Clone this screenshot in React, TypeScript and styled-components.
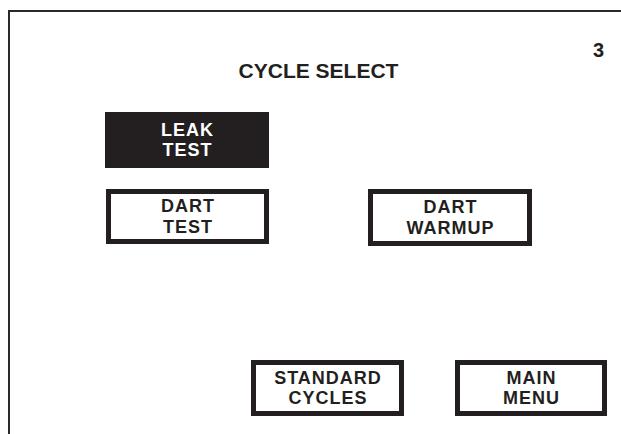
import styled, { createGlobalStyle } from "styled-components";

const GlobalStyle = createGlobalStyle`
  html, body {
    margin: 0;
    padding: 0;
    background: #ffffff;
    overflow: hidden;
  }
  body {
    font-family: "Liberation Sans", Arial, Helvetica, sans-serif;
    color: #231f20;
  }
`;

type Row = { label: string[]; filled?: boolean; width: number; height: number };

const topRow: Row[] = [{ label: ["LEAK", "TEST"], filled: true, width: 164, height: 56 }];
const midRow: Row[] = [
  { label: ["DART", "TEST"], width: 163, height: 55 },
  { label: ["DART", "WARMUP"], width: 164, height: 57 },
];
const bottomRow: Row[] = [
  { label: ["STANDARD", "CYCLES"], width: 153, height: 56 },
  { label: ["MAIN", "MENU"], width: 152, height: 56 },
];

function App() {
  const renderRow = (items: Row[]) =>
    items.map(item => (
      <CycleButton
        key={item.label.join(" ")}
        $filled={item.filled}
        $width={item.width}
        $height={item.height}
      >
        {item.label.map(line => (
          <Line key={line}>{line}</Line>
        ))}
      </CycleButton>
    ));

  return (
    <>
      <GlobalStyle />
      <Screen>
        <PageNumber>3</PageNumber>
        <Title>CYCLE SELECT</Title>
        <ButtonRow $indent={95} $gap={0} $top={31}>
          {renderRow(topRow)}
        </ButtonRow>
        <ButtonRow $indent={96} $gap={99} $top={21}>
          {renderRow(midRow)}
        </ButtonRow>
        <ButtonRow $indent={241} $gap={51} $top={114}>
          {renderRow(bottomRow)}
        </ButtonRow>
      </Screen>
    </>
  );
}

export default App;

const Screen = styled.div`
  box-sizing: border-box;
  width: 613px;
  height: 440px;
  margin: 10px 0 0 8px;
  border-top: 2px solid #2b2829;
  border-left: 2px solid #2b2829;
  display: flex;
  flex-direction: column;
`;

const PageNumber = styled.div`
  margin-top: 28px;
  padding-right: 17px;
  text-align: right;
  font-size: 20px;
  line-height: 20px;
  font-weight: 700;
`;

const Title = styled.h1`
  margin: 0;
  padding-left: 6px;
  text-align: center;
  font-size: 21px;
  line-height: 21px;
  font-weight: 700;
`;

const ButtonRow = styled.div<{ $indent: number; $gap: number; $top: number }>`
  display: flex;
  align-items: flex-start;
  margin-top: ${p => p.$top}px;
  padding-left: ${p => p.$indent}px;
  gap: ${p => p.$gap}px;
`;

const CycleButton = styled.div<{ $filled?: boolean; $width: number; $height: number }>`
  box-sizing: border-box;
  width: ${p => p.$width}px;
  height: ${p => p.$height}px;
  border: 5px solid #231f20;
  background: ${p => (p.$filled ? "#231f20" : "#ffffff")};
  color: ${p => (p.$filled ? "#ffffff" : "#231f20")};
  display: flex;
  flex-direction: column;
  align-items: center;
  justify-content: center;
  font-size: 18px;
  line-height: 21px;
  font-weight: 700;
  letter-spacing: 1px;
`;

const Line = styled.span`
  display: block;
  line-height: 20.5px;
  text-indent: 1px;
`;
